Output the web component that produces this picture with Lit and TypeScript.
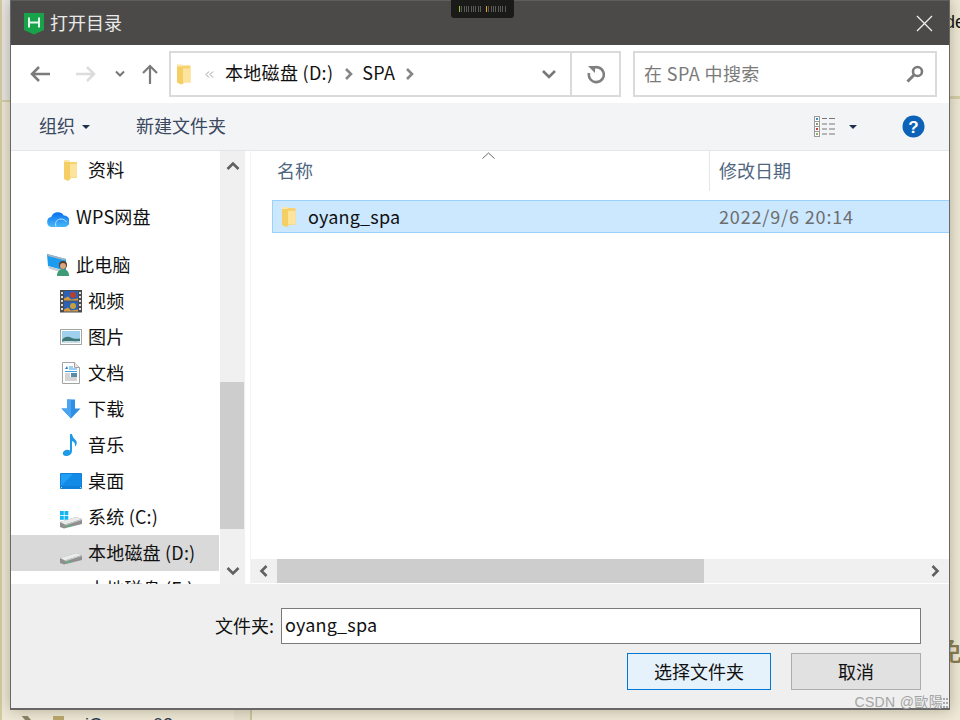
import { LitElement, html, css, svg } from "lit";
import { customElement } from "lit/decorators.js";

const folder = (w = 16, h = 21) => html`<svg class="ico" width=${w} height=${h} viewBox="0 0 16 21">
  <path d="M5 2h9.500v17H5z" fill="#f7d26e"/>
  <path d="M1 1l6 1.500V5l.5 15L5 21l-4-2z" fill="#f5cf63"/>
  <path d="M1 1h5.500l.5 2H1z" fill="#fae7ab"/>
  <path d="M7 5h7.500v13.500H7z" fill="#fde49c"/>
</svg>`;

const driveBody = svg`<path d="M0 17L16 12l6 2v5L4 23.500 0 22z" fill="#8e9090"/><path d="M0 17L16 12l6 2L5 19.500z" fill="#e9eaea"/><path d="M5 19.500L22 14v1L5 20.500z" fill="#c9cbcb"/><rect x="6" y="20.500" width="5" height="1.500" fill="#5cb27c"/>`;

const sideIcons: Record<string, unknown> = {
  folder: svg`<path d="M8 4h9v16H8z" fill="#f7d26e"/><path d="M4 2l6 1.500V6l.5 15L8 23l-4-2z" fill="#f5cf63"/><path d="M4 2h5.500l.5 2H4z" fill="#fae7ab"/><path d="M10 6h7v13.500h-7z" fill="#fde49c"/>`,
  cloud: svg`<defs><linearGradient id="cl" x1="0" y1="0" x2="0" y2="1"><stop offset="0" stop-color="#0a6ff0"/><stop offset="1" stop-color="#45b8f8"/></linearGradient></defs>
    <path d="M5 21a5 5 0 0 1-.8-9.900A7 7 0 0 1 16.800 9.500 5.800 5.800 0 0 1 18 21z" fill="url(#cl)"/>
    <path d="M9 20.500c-1.500-4 1-7.500 5-7.500 2.500 0 4.500 1.500 5.500 3" fill="none" stroke="#bfe6ff" stroke-width="1"/>`,
  pc: svg`<path d="M0 1l19 5v12L1 13z" fill="#1c9cf0"/><path d="M0 1l19 5-1 1.500L1 3z" fill="#a9b4bd"/><path d="M1 13l17 5v2.500L2 15.500z" fill="#c4ccd2"/>
    <circle cx="16" cy="12" r="4" fill="#5a3b26"/><circle cx="16" cy="13" r="3" fill="#d9a583"/><path d="M10 23c0-5 3-7 6-7s6 2 6 7z" fill="#3f9a78"/>`,
  video: svg`<rect x="0" y="1" width="22" height="22.500" fill="#4c4c4c"/><rect x="4" y="2" width="14" height="9.500" fill="#2b62b8"/><rect x="4" y="12.500" width="14" height="10" fill="#2b62b8"/>
    <path d="M4 11.500v-2l4-2 3 3 7-1v2zM4 22.500v-2l4-2 3 3 7-1v2z" fill="#d89a3a"/><circle cx="13" cy="6" r="3" fill="#b8402f"/><circle cx="13" cy="17" r="3" fill="#c9a13a"/>
    <g fill="#ddd"><rect x="1" y="3" width="2" height="2"/><rect x="1" y="7" width="2" height="2"/><rect x="1" y="11" width="2" height="2"/><rect x="1" y="15" width="2" height="2"/><rect x="1" y="19" width="2" height="2"/><rect x="19" y="3" width="2" height="2"/><rect x="19" y="7" width="2" height="2"/><rect x="19" y="11" width="2" height="2"/><rect x="19" y="15" width="2" height="2"/><rect x="19" y="19" width="2" height="2"/></g>`,
  picture: svg`<rect x="0.500" y="4.500" width="21" height="15" fill="#fff" stroke="#a5a5a5"/><rect x="2" y="6" width="18" height="12" fill="#9fd0ee"/><path d="M2 15c3-4 6-4 10-2 3 1 5 1 8 .500V18H2z" fill="#3f7a78"/><path d="M2 16.500c6-1 12 0 18-.500V18H2z" fill="#c8dde8"/>`,
  doc: svg`<path d="M2.500 1.500h12l5 5v16h-17z" fill="#fff" stroke="#a3a3a3"/><path d="M14.500 1.500v5h5" fill="#e8e8e8" stroke="#a3a3a3"/>
    <path d="M5 8l2-3 1 3z" fill="#2a7fd8"/><path d="M9 6h4M9 8h8M5 10.500h12" stroke="#3d9fe0" fill="none"/><path d="M5 13h5M5 15h5M5 17h12M5 19h12" stroke="#a9a9a9" fill="none"/><rect x="11" y="12" width="6" height="4" fill="#5a8ca8"/>`,
  down: svg`<path d="M7 2.500h8v9h5.500L11 21.500 1.500 11.500H7z" fill="#2f8fe6"/><path d="M7 2.500h4v19L1.500 11.500H7z" fill="#4ba4ef"/>`,
  music: svg`<path d="M10 1h2c.500 3 2 4.500 4 6.500 1.500 2 .5 5-1 6 .5-3-1-5-3-5.500V18c0 3-3 5-6 5-3.500 0-4-3.500-2-5 2-1.500 4-1.500 6-.500z" fill="#1e9be8"/>`,
  desktop: svg`<rect x="0" y="4" width="22" height="16" rx="1" fill="#0f7fd8"/><path d="M1 5h20v12H1z" fill="#1fa0f5"/><path d="M1 17L13 5h8v12z" fill="#128ae6"/><path d="M1 18.500h20" stroke="#bfe3fb" stroke-dasharray="1 18 1 0"/>`,
  sys: svg`<g fill="#12b4f2"><rect x="0" y="6" width="3.800" height="4"/><rect x="4.500" y="6" width="3.800" height="4"/><rect x="0" y="10.800" width="3.800" height="4"/><rect x="4.500" y="10.800" width="3.800" height="4"/></g>${driveBody}`,
  drive: driveBody,
};

const rows = [
  { icon: "folder", label: "资料", lvl: 1, gap: false },
  { icon: "cloud", label: "WPS网盘", lvl: 0, gap: true },
  { icon: "pc", label: "此电脑", lvl: 0, gap: true },
  { icon: "video", label: "视频", lvl: 1, gap: false },
  { icon: "picture", label: "图片", lvl: 1, gap: false },
  { icon: "doc", label: "文档", lvl: 1, gap: false },
  { icon: "down", label: "下载", lvl: 1, gap: false },
  { icon: "music", label: "音乐", lvl: 1, gap: false },
  { icon: "desktop", label: "桌面", lvl: 1, gap: false },
  { icon: "sys", label: "系统 (C:)", lvl: 1, gap: false },
  { icon: "drive", label: "本地磁盘 (D:)", lvl: 1, gap: false, sel: true },
  { icon: "drive", label: "本地磁盘 (E:)", lvl: 1, gap: false },
];

const chev = (d: string, cls = "") => html`<svg class="ico ${cls}" width="14" height="14" viewBox="0 0 14 14"><path d=${d} fill="none" stroke="currentColor" stroke-width="2.600"/></svg>`;

@customElement("app-root")
export class AppRoot extends LitElement {
  static styles = css`
    :host { display: block; position: relative; width: 960px; height: 720px; overflow: hidden;
      background: #efe9d7; font-family: "Noto Sans CJK SC", "Liberation Sans", sans-serif; font-size: 18px; color: #111; }
    .ico { display: block; flex: none; }

    .bg-top { position: absolute; left: 0; top: 0; width: 10px; height: 100px; background: linear-gradient(90deg, #ece8e0, #e6e6e4); }
    .bg-left { position: absolute; left: 0; top: 0; width: 2px; height: 720px; background: #d3cba2; }
    .bg-band-l { position: absolute; left: 0; top: 100px; width: 10px; height: 2px; background: #d6cfaa; }
    .bg-band-r { position: absolute; left: 950px; top: 96px; width: 10px; height: 3px; background: #d6cfaa; }
    .bg-vline { position: absolute; left: 250px; top: 700px; width: 2px; height: 20px; background: #cfc69b; }
    .bg-cell { position: absolute; left: 234px; top: 700px; width: 16px; height: 20px; background: #e8e2cf; }
    .bg-de { position: absolute; left: 945px; top: 9px; font: 18px/26px "Liberation Sans", sans-serif; color: #111; }
    .bg-mian { position: absolute; left: 936px; top: 632px; font-size: 26px; font-weight: 500; line-height: 36px; color: #8a7c50; }
    .bg-tree { position: absolute; left: 85px; top: 713px; font: 18px/24px "Liberation Sans", sans-serif; color: #2b3a55; white-space: pre; }
    .bg-arrow { position: absolute; left: 25px; top: 716px; width: 6px; height: 8px; background: #8b8468; transform: skewX(40deg); }
    .bg-folder { position: absolute; left: 53px; top: 716px; width: 11px; height: 8px; background: #bba86a; }

    .dialog { position: absolute; left: 10px; top: 0; width: 940px; height: 710px; box-sizing: border-box;
      border: solid #676767; border-width: 0 1px 2px 1px; box-shadow: 0 0 14px rgba(60, 55, 30, .35);
      display: flex; flex-direction: column; background: #fff; }

    .title { height: 45px; flex: none; box-sizing: border-box; background: #4c4a48; border-top: 1px solid #5e5e5c; display: flex; align-items: center; color: #e9e9e9; padding-left: 13px; }
    .title .name { margin-left: 6px; line-height: 24px; padding-bottom: 2px; }
    .title .close { margin-left: auto; margin-right: 16px; }

    .meter { position: absolute; left: 440px; top: 0; width: 63px; height: 18px; background: #1a1a19; border-radius: 0 0 3px 3px; display: flex; align-items: center; padding-left: 8px; box-sizing: border-box; }
    .meter i { width: 1px; height: 6px; background: #5b5b58; margin-right: 1.330px; flex: none; }
    .meter i.g { background: #8fc23e; }
    .meter i.o { background: #f0a020; }
    .meter i.sp { margin-left: 3.700px; }

    .nav { height: 58px; flex: none; display: flex; align-items: center; background: #fff; }
    .b-back { margin-left: 19px; color: #7b7b7b; }
    .b-fwd { margin-left: 26px; color: #dcdcdc; }
    .b-more { margin-left: 19px; color: #767676; }
    .b-up { margin-left: 17px; color: #7b7b7b; }

    .addr { margin-left: 11px; width: 452px; height: 46px; box-sizing: border-box; border: 2px solid #dadada; display: flex; align-items: center; }
    .addr .f0 { margin-left: 5px; }
    .addr .lq { margin-left: 13px; flex: none; }
    .addr .seg { line-height: 24px; white-space: pre; padding-bottom: 4px; letter-spacing: .3px; }
    .addr .s1 { margin-left: 11px; }
    .addr .sep { color: #868686; margin: 0 6px 0 9px; }
    .addr .sep2 { margin-left: 8px; }
    .addr .drop { margin-left: auto; color: #777; margin-right: 14px; }
    .addr .refresh { width: 49px; height: 100%; border-left: 2px solid #dadada; display: flex; align-items: center; justify-content: center; box-sizing: border-box; color: #7f7f7f; }

    .search { margin-left: 12px; width: 304px; height: 46px; box-sizing: border-box; border: 2px solid #dadada; display: flex; align-items: center; padding: 0 11px 0 9px; }
    .search span { color: #7a7a7a; line-height: 24px; padding-bottom: 2px; letter-spacing: .4px; }
    .search svg { margin-left: auto; }

    .tools { height: 48px; flex: none; box-sizing: border-box; background: #f3f4f6; border-bottom: 1px solid #e6e6e6; display: flex; align-items: center; color: #3a4860; padding-left: 28px; }
    .tools .t { line-height: 24px; padding-bottom: 4px; }
    .tools .caret { width: 0; height: 0; border: 4px solid transparent; border-top: 4px solid #1e2f4a; border-bottom: 0; margin-left: 7px; }
    .tools .new { margin-left: 46px; }
    .tools .views { margin-left: auto; }
    .tools .c2 { margin-left: 13px; }
    .tools .help { margin-left: 45px; margin-right: 24px; }

    .body { flex: 1; min-height: 0; display: flex; background: #fff; }
    .side { width: 209px; flex: none; overflow: hidden; padding-top: 1px; }
    .row { height: 36px; display: flex; align-items: center; white-space: nowrap; line-height: 24px; margin-right: 1px; }
    .row.l0 { padding-left: 36px; }
    .row.l1 { padding-left: 49px; }
    .row.gap { margin-top: 11.500px; }
    .row.sel { background: #d9d9d9; }
    .row .lbl { margin-left: 6px; padding-bottom: 2px; letter-spacing: .2px; }
    .row.l0 .lbl { margin-left: 7px; padding-bottom: 3px; }

    .vs { width: 25px; flex: none; background: #f0f0f0; display: flex; flex-direction: column; color: #606060; }
    .vs .a1 { height: 30px; display: flex; align-items: center; justify-content: center; }
    .vs .sp1 { height: 201px; }
    .vs .th { height: 147px; background: #cdcdcd; margin-right: 1px; }
    .vs .sp2 { flex: 1; }
    .vs .a2 { height: 26px; display: flex; align-items: center; justify-content: center; }

    .gut { width: 5px; flex: none; background: #fff; border-right: 1px solid #f4f4f4; }

    .main { flex: 1; min-width: 0; display: flex; flex-direction: column; padding-bottom: 1px; position: relative; }
    .head { height: 40px; flex: none; display: flex; align-items: center; color: #4f6680; line-height: 24px; }
    .head .n { width: 459px; box-sizing: border-box; padding: 0 0 2px 26px; height: 100%; display: flex; align-items: center; border-right: 1px solid #e5e5e5; }
    .head .d { padding: 0 0 2px 9px; }
    .sort { position: absolute; left: 231px; top: 1px; }
    .list { flex: 1; min-height: 0; padding: 9px 0 0 21px; }
    .item { height: 33px; box-sizing: border-box; background: #cce8ff; border: 1px solid #99d1ff; border-right: 0; display: flex; align-items: center; }
    .item .nm { width: 438px; padding-left: 8px; box-sizing: border-box; display: flex; align-items: center; gap: 11px; line-height: 24px; flex: none; }
    .item .nm span { padding-bottom: 2px; letter-spacing: .2px; }
    .item .dt { color: #6d6d6d; margin-left: 8px; line-height: 24px; padding-bottom: 2px; letter-spacing: .85px; }

    .hs { height: 24px; flex: none; background: #f0f0f0; display: flex; align-items: stretch; color: #606060; }
    .hs .l { width: 26px; display: flex; align-items: center; justify-content: center; }
    .hs .th { width: 427px; background: #cdcdcd; }
    .hs .r { margin-left: auto; width: 28px; display: flex; align-items: center; justify-content: center; }

    .foot { height: 124px; flex: none; box-sizing: border-box; background: #efefef; padding: 24px 28px 0 0; display: flex; flex-direction: column; align-items: flex-end; position: relative; }
    .line { display: flex; align-items: center; gap: 7px; }
    .line label { line-height: 24px; padding-bottom: 2px; }
    .input { width: 640px; height: 36px; box-sizing: border-box; border: 1px solid #7a7a7a; background: #fff; padding: 0 0 5px 3px; display: flex; align-items: center; line-height: 24px; letter-spacing: .2px; }
    .btns { display: flex; gap: 20px; margin-top: 9px; }
    .btn { height: 37px; box-sizing: border-box; display: flex; align-items: center; justify-content: center; line-height: 24px; padding-bottom: 2px; }
    .btn.ok { width: 144px; background: #e5f1fb; border: 1px solid #0078d7; }
    .btn.no { width: 130px; background: #e1e1e1; border: 1px solid #adadad; }
    .mark { position: absolute; right: 1px; bottom: -1px; display: flex; align-items: center; color: #a4a4a4; font: 14px/13px "Liberation Sans", "Noto Sans CJK TC", sans-serif; white-space: pre; letter-spacing: .35px; }
    .mark svg { margin-left: -3px; }
  `;

  render() {
    const left = Array.from({ length: 9 });
    const right = Array.from({ length: 8 });
    return html`
      <div class="bg-top"></div><div class="bg-left"></div>
      <div class="bg-band-l"></div><div class="bg-band-r"></div>
      <div class="bg-cell"></div><div class="bg-vline"></div>
      <div class="bg-de">de</div><div class="bg-mian">免</div>
      <div class="bg-arrow"></div><div class="bg-folder"></div>
      <div class="bg-tree">jQuery   03</div>

      <div class="dialog">
        <div class="title">
          <svg class="ico" width="20" height="23" viewBox="0 0 20 23"><path d="M0 1h20v17l-10 4.500L0 18z" fill="#18a34a"/><path d="M5 5.500v10M15 5.500v10M5 10.500h10" stroke="#e6f7ec" stroke-width="2" fill="none"/></svg>
          <span class="name">打开目录</span>
          <svg class="ico close" width="17" height="17" viewBox="0 0 17 17"><path d="M1 1l15 15M16 1L1 16" stroke="#f0f0f0" stroke-width="1.300" fill="none"/></svg>
        </div>
        <div class="meter"><i class="g"></i>${left.map(() => html`<i></i>`)}<i class="o sp"></i>${right.map(() => html`<i></i>`)}</div>

        <div class="nav">
          <svg class="ico b-back" width="20" height="16" viewBox="0 0 20 16"><path d="M20 8H2M9 1L2 8l7 7" fill="none" stroke="currentColor" stroke-width="2.500"/></svg>
          <svg class="ico b-fwd" width="20" height="16" viewBox="0 0 20 16"><path d="M0 8h18M11 1l7 7-7 7" fill="none" stroke="currentColor" stroke-width="2.500"/></svg>
          <svg class="ico b-more" width="10" height="8" viewBox="0 0 10 8"><path d="M1 1.500l4 4 4-4" fill="none" stroke="currentColor" stroke-width="2"/></svg>
          <svg class="ico b-up" width="16" height="20" viewBox="0 0 16 20"><path d="M8 20V2M1 9l7-7 7 7" fill="none" stroke="currentColor" stroke-width="2.200"/></svg>
          <div class="addr">
            <span class="f0">${folder(16, 22)}</span>
            <svg class="ico lq" width="9" height="7" viewBox="0 0 9 7"><path d="M4 .5L1 3.500l3 3M8 .5L5 3.500l3 3" fill="none" stroke="#9a9a9a" stroke-width="1"/></svg>
            <span class="seg s1">本地磁盘 (D:)</span>
            <span class="sep">${chev("M4 2l5 5-5 5")}</span>
            <span class="seg">SPA</span>
            <span class="sep sep2">${chev("M4 2l5 5-5 5")}</span>
            <span class="drop">${chev("M1 4l6 6 6-6")}</span>
            <div class="refresh">
              <svg class="ico" width="18" height="19" viewBox="0 0 18 19"><path d="M5 3.500A7.500 7.500 0 1 1 2 8" fill="none" stroke="currentColor" stroke-width="2.600"/><path d="M1 1h7v7z" fill="currentColor"/></svg>
            </div>
          </div>
          <div class="search">
            <span>在 SPA 中搜索</span>
            <svg class="ico" width="18" height="18" viewBox="0 0 18 18"><circle cx="11.500" cy="6.500" r="4.500" fill="none" stroke="#7b7b7b" stroke-width="2.600"/><path d="M8 10l-6.500 6.500" stroke="#7b7b7b" stroke-width="3" fill="none"/></svg>
          </div>
        </div>

        <div class="tools">
          <span class="t">组织</span><span class="caret"></span>
          <span class="t new">新建文件夹</span>
          <svg class="ico views" width="22" height="22" viewBox="0 0 22 22">
            <g fill="#fff" stroke="#9a9a9a"><rect x=".5" y=".5" width="5" height="5"/><rect x=".5" y="5.500" width="5" height="5"/><rect x=".5" y="10.500" width="5" height="5"/><rect x=".5" y="15.500" width="5" height="5"/></g>
            <rect x="2" y="2" width="2" height="2" fill="#3c8fb8"/><rect x="2" y="7" width="2" height="2" fill="#8a9a6a"/><rect x="2" y="12" width="2" height="2" fill="#c8402f"/><rect x="2" y="17" width="2" height="2" fill="#9ab06a"/>
            <path d="M8 2.500h5M15 2.500h6M8 8h5M15 8h6M8 13h5M15 13h6M8 18h5M15 18h6" stroke="#777" fill="none"/>
          </svg>
          <span class="caret c2"></span>
          <svg class="ico help" width="23" height="23" viewBox="0 0 23 23"><circle cx="11.500" cy="11.500" r="11" fill="#0b62b6"/><text x="11.500" y="17.500" text-anchor="middle" font-family="Liberation Sans, sans-serif" font-weight="700" font-size="17" fill="#fff">?</text></svg>
        </div>

        <div class="body">
          <div class="side">
            ${rows.map(
              (r) => html`<div class="row l${r.lvl} ${r.gap ? "gap" : ""} ${r.sel ? "sel" : ""}">
                <svg class="ico" width="22" height="24" viewBox="0 0 22 24">${sideIcons[r.icon]}</svg>
                <span class="lbl">${r.label}</span>
              </div>`
            )}
          </div>
          <div class="vs">
            <div class="a1">${chev("M1.500 10l5.500-5.500 5.500 5.500")}</div>
            <div class="sp1"></div><div class="th"></div><div class="sp2"></div>
            <div class="a2">${chev("M1.500 4l5.500 5.500 5.500-5.500")}</div>
          </div>
          <div class="gut"></div>
          <div class="main">
            <svg class="ico sort" width="13" height="7" viewBox="0 0 13 7"><path d="M.5 6.500l6-5.500 6 5.500" fill="none" stroke="#6a6a6a"/></svg>
            <div class="head"><div class="n">名称</div><div class="d">修改日期</div></div>
            <div class="list">
              <div class="item">
                <div class="nm">${folder(16, 21)}<span>oyang_spa</span></div>
                <span class="dt">2022/9/6 20:14</span>
              </div>
            </div>
            <div class="hs">
              <div class="l">${chev("M9.500 2l-5 5 5 5")}</div>
              <div class="th"></div>
              <div class="r">${chev("M4.500 2l5 5-5 5")}</div>
            </div>
          </div>
        </div>

        <div class="foot">
          <div class="line"><label>文件夹:</label><div class="input">oyang_spa</div></div>
          <div class="btns"><div class="btn ok">选择文件夹</div><div class="btn no">取消</div></div>
          <div class="mark">CSDN @歐陽<svg class="ico" width="8" height="12" viewBox="0 0 8 12"><g fill="#a8a8a8"><rect x="0" y="1" width="2" height="2"/><rect x="3" y="1" width="2" height="2"/><rect x="6" y="1" width="2" height="2"/><rect x="3" y="5" width="2" height="2"/><rect x="6" y="5" width="2" height="2"/><rect x="0" y="9" width="2" height="2"/><rect x="3" y="9" width="2" height="2"/><rect x="6" y="9" width="2" height="2"/></g></svg></div>
        </div>
      </div>
    `;
  }
}
